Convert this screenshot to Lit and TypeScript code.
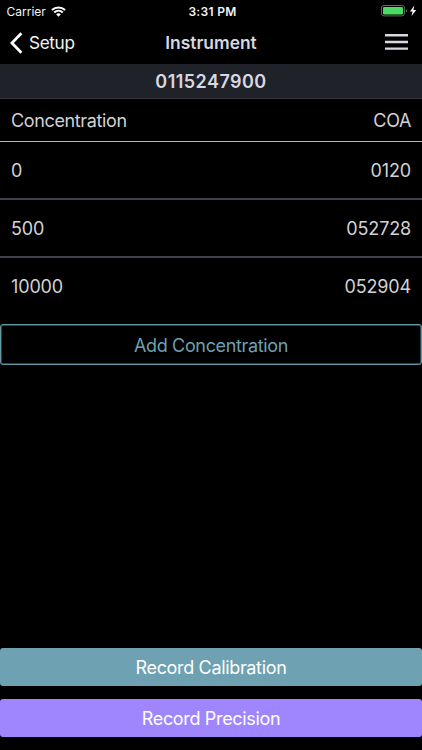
import { LitElement, html, css } from "lit";
import { customElement, state } from "lit/decorators.js";

interface Concentration {
  level: string;
  coa: string;
}

@customElement("status-bar")
class StatusBar extends LitElement {
  static styles = css`
    :host {
      display: grid;
      grid-template-columns: 1fr auto 1fr;
      align-items: center;
      height: 22px;
      color: #f4f4f4;
      font-size: 12px;
    }
    .carrier {
      display: flex;
      align-items: center;
      gap: 5px;
      padding-left: 6.5px;
      letter-spacing: 0;
    }
    .time {
      padding: 1px 0 0 3px;
      font-size: 12px;
      font-weight: 600;
      letter-spacing: 0.3px;
    }
    .power {
      display: flex;
      align-items: center;
      justify-content: flex-end;
      padding-right: 5px;
    }
    svg {
      display: block;
    }
  `;

  render() {
    return html`
      <div class="carrier">
        <span>Carrier</span>
        <svg width="15" height="11" viewBox="0 0 15 11" fill="none" stroke="#fff" stroke-width="2">
          <path d="M0.9 4.1C4.7 0.5 10.3 0.5 14.1 4.1" />
          <path d="M3.2 6.5C5.7 4.2 9.3 4.2 11.8 6.5" />
          <path d="M7.5 10.7L5.1 8.3C6.5 7 8.5 7 9.9 8.3Z" fill="#fff" stroke="none" />
        </svg>
      </div>
      <div class="time">3:31 PM</div>
      <div class="power">
        <svg width="36" height="12" viewBox="0 0 36 12">
          <rect x="0.5" y="0.5" width="23" height="10.4" rx="2.6" fill="none" stroke="#626762" />
          <rect x="2" y="2" width="20" height="7.4" rx="1.2" fill="#4cd964" />
          <path d="M25 4v3.6c1.3-.5 1.3-3.1 0-3.6Z" fill="#626762" />
          <path d="M33.3 0.6L29 6.6h2.6L30.5 11l4.7-6h-2.8Z" fill="#fff" />
        </svg>
      </div>
    `;
  }
}

@customElement("nav-header")
class NavHeader extends LitElement {
  static styles = css`
    :host {
      display: grid;
      grid-template-columns: 1fr auto 1fr;
      align-items: center;
      box-sizing: border-box;
      height: 42px;
      padding-bottom: 1px;
    }
    .back {
      display: flex;
      align-items: center;
      gap: 6px;
      padding-left: 10px;
      color: #f4f4f4;
      font-size: 17.2px;
      letter-spacing: -0.35px;
    }
    .title {
      color: #d7d8e0;
      font-size: 17.4px;
      font-weight: 600;
      letter-spacing: 0;
    }
    .menu {
      display: flex;
      justify-content: flex-end;
      padding-right: 14px;
      margin-top: -2px;
    }
    svg {
      display: block;
    }
  `;

  render() {
    return html`
      <div class="back">
        <svg width="13" height="22" viewBox="0 0 13 22" fill="none" stroke="#fff" stroke-width="2.8">
          <path d="M11.4 1.2L1.9 11L11.4 20.8" />
        </svg>
        <span>Setup</span>
      </div>
      <div class="title">Instrument</div>
      <div class="menu">
        <svg width="23" height="16" viewBox="0 0 23 16" fill="#d7d8e0">
          <path d="M0 0h23v2.4H0zM0 6.8h23v2.4H0zM0 13.4h23v2.4H0z" />
        </svg>
      </div>
    `;
  }
}

@customElement("app-root")
class AppRoot extends LitElement {
  static styles = css`
    :host {
      display: flex;
      flex-direction: column;
      box-sizing: border-box;
      height: 750px;
      background: #000;
      color: #d2d2d6;
      font-family: Inter, "Liberation Sans", sans-serif;
      font-size: 18px;
      letter-spacing: -0.15px;
    }
    .serial {
      box-sizing: border-box;
      height: 35px;
      line-height: 35px;
      border-bottom: 1px solid #34343c;
      background: #1f2229;
      color: #d7d8e0;
      font-weight: 600;
      text-align: center;
      letter-spacing: 0.45px;
    }
    .row {
      display: flex;
      align-items: center;
      justify-content: space-between;
      box-sizing: border-box;
      height: 58px;
      padding: 0 11px;
      border-bottom: 2px solid #3f3d4e;
    }
    .row.head {
      height: 43px;
      border-bottom: 1px solid #b4b4b8;
      letter-spacing: -0.36px;
    }
    .row.last {
      border-bottom-color: transparent;
    }
    button {
      box-sizing: border-box;
      width: 100%;
      padding: 0;
      border: 0;
      border-radius: 3px;
      font: inherit;
      letter-spacing: -0.34px;
      color: #fff;
    }
    .add {
      height: 41px;
      margin-top: 8px;
      padding-top: 1px;
      border: 1px solid #6397a6;
      box-shadow: inset 0 0 0 0.5px #548795;
      background: transparent;
      color: #6ea0b0;
    }
    .actions {
      display: flex;
      flex-direction: column;
      gap: 13px;
      margin-top: auto;
      padding-bottom: 13px;
    }
    .actions button {
      height: 38px;
    }
    .calibration {
      background: #6ea1b1;
    }
    .precision {
      background: #9f86ff;
    }
  `;

  @state() private rows: Concentration[] = [
    { level: "0", coa: "0120" },
    { level: "500", coa: "052728" },
    { level: "10000", coa: "052904" },
  ];

  render() {
    return html`
      <status-bar></status-bar>
      <nav-header></nav-header>
      <div class="serial">0115247900</div>
      <div class="row head"><span>Concentration</span><span>COA</span></div>
      ${this.rows.map(
        (r, i) => html`
          <div class="row ${i === this.rows.length - 1 ? "last" : ""}">
            <span>${r.level}</span><span>${r.coa}</span>
          </div>
        `
      )}
      <button class="add">Add Concentration</button>
      <div class="actions">
        <button class="calibration">Record Calibration</button>
        <button class="precision">Record Precision</button>
      </div>
    `;
  }
}
